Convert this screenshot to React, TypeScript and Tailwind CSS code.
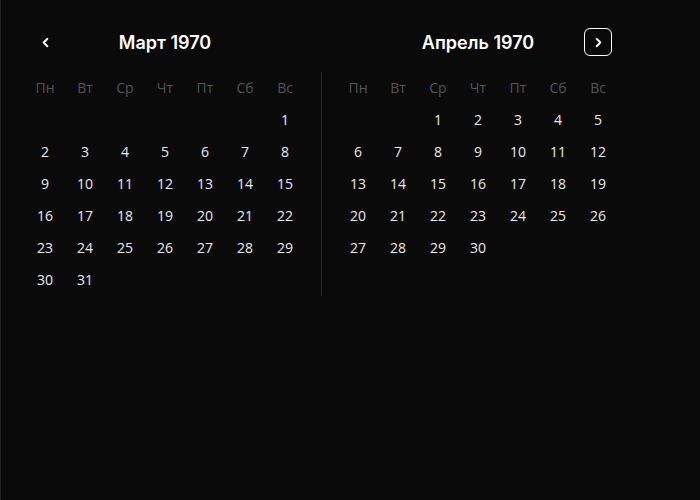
import { ChevronLeft, ChevronRight } from "lucide-react";

const weekDays = ["Пн", "Вт", "Ср", "Чт", "Пт", "Сб", "Вс"];

type MonthProps = {
  title: string;
  offset: number;
  days: number;
  nav: "prev" | "next";
};

function Month({ title, offset, days, nav }: MonthProps) {
  const cells: (number | null)[] = [];
  for (let i = 0; i < offset; i++) cells.push(null);
  for (let d = 1; d <= days; d++) cells.push(d);

  return (
    <div className="w-[280px] flex flex-col">
      <div className="h-7 flex items-center">
        <div className="w-10 flex justify-center">
          {nav === "prev" && (
            <button className="w-7 h-7 flex items-center justify-center text-white">
              <ChevronLeft size={15} strokeWidth={3} />
            </button>
          )}
        </div>
        <div className="flex-1 text-center text-white text-[18px] font-semibold font-['Inter',sans-serif]">
          {title}
        </div>
        <div className="w-10 flex justify-center">
          {nav === "next" && (
            <button className="w-7 h-7 flex items-center justify-center text-white border border-white rounded-md">
              <ChevronRight size={15} strokeWidth={3} />
            </button>
          )}
        </div>
      </div>
      <div className="mt-4 grid grid-cols-7 font-['Open_Sans',sans-serif] text-sm">
        {weekDays.map((w) => (
          <div key={w} className="h-8 flex items-center justify-center text-[#555]">
            {w}
          </div>
        ))}
        {cells.map((c, i) => (
          <div key={i} className="h-8 flex items-center justify-center text-[#ececec]">
            {c}
          </div>
        ))}
      </div>
    </div>
  );
}

export default function App() {
  return (
    <div className="w-[700px] h-[500px] bg-[#0a0a0a] border-l border-[#1f1f1f] pt-7 pl-6">
      <div className="flex">
        <Month title="Март 1970" offset={6} days={31} nav="prev" />
        <div className="w-px bg-[#2e2e2e] mx-4 mt-11" />
        <Month title="Апрель 1970" offset={2} days={30} nav="next" />
      </div>
    </div>
  );
}
